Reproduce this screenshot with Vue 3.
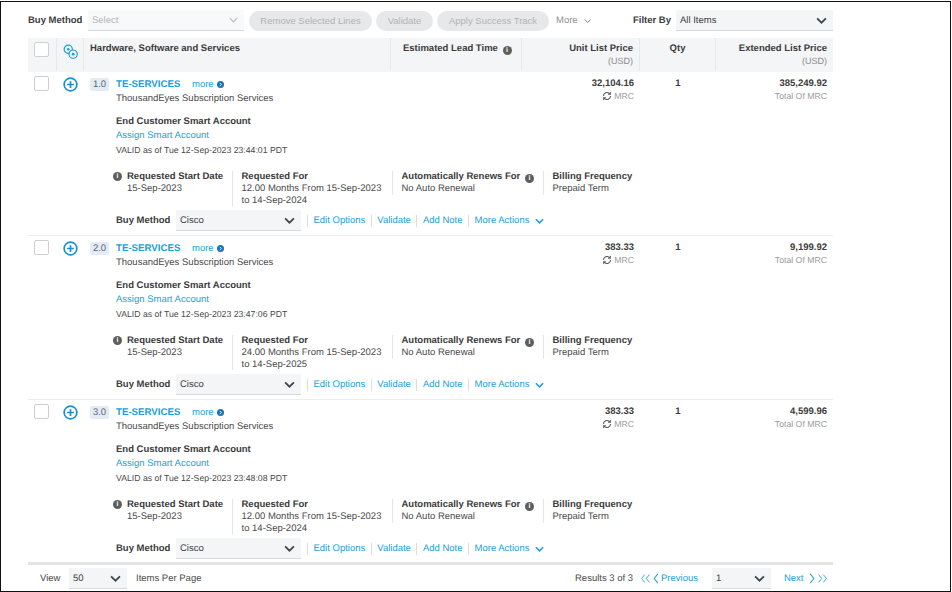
<template>
  <div class="frame">
    <div class="page">
      <div class="toolbar">
        <span class="tb-label buy-label">Buy Method</span>
        <div class="select sel-bulk">Select <svg class="chev" viewBox="0 0 10 6"><path d="M1 1l4 4 4-4" /></svg></div>
        <button class="pill w-remove">Remove Selected Lines</button>
        <button class="pill w-validate">Validate</button>
        <button class="pill w-apply">Apply Success Track</button>
        <span class="more-top">More <svg class="chev" viewBox="0 0 10 6"><path d="M1 1l4 4 4-4" /></svg></span>
        <span class="tb-label filter-label">Filter By</span>
        <div class="select sel-filter">All Items <svg class="chev dark" viewBox="0 0 10 6"><path d="M1 1l4 4 4-4" /></svg></div>
      </div>

      <div class="grid head">
        <div class="hc"><span class="check"></span></div>
        <div class="hc hc-icon">
          <svg class="gears" viewBox="0 0 16 16">
            <circle cx="5.6" cy="5.6" r="4.4" />
            <circle cx="10.8" cy="10.8" r="4.4" fill="#f3f5f7" />
            <circle cx="5.6" cy="5.6" r="1.4" class="dot" />
            <circle cx="10.8" cy="10.8" r="1.5" class="dot" />
          </svg>
        </div>
        <div class="hc hc-title"><b>Hardware, Software and Services</b></div>
        <div class="hc hc-title lead"><b>Estimated Lead Time</b> <i class="info"><em>i</em></i></div>
        <div class="hc right"><b>Unit List Price</b><span>(USD)</span></div>
        <div class="hc center"><b>Qty</b></div>
        <div class="hc right last"><b>Extended List Price</b><span>(USD)</span></div>
      </div>

      <div v-for="line in lines" :key="line.no" class="grid line">
        <div class="cell-check"><span class="check"></span></div>
        <div class="cell-plus">
          <svg class="plus" viewBox="0 0 16 16">
            <circle cx="8" cy="8" r="6.8" />
            <path d="M8 4.4v7.2M4.4 8h7.2" />
          </svg>
        </div>
        <div class="cell-title">
          <div class="title-row">
            <span class="badge">{{ line.no }}</span>
            <a class="sku">TE-SERVICES</a>
            <a class="more">more</a>
            <svg class="more-dot" viewBox="0 0 8 8"><circle cx="4" cy="4" r="4" /><path d="M3.2 2.2L5 4 3.2 5.8" /></svg>
          </div>
          <div class="subtitle">ThousandEyes Subscription Services</div>
        </div>
        <div class="cell-price">
          <b>{{ line.unit }}</b>
          <span class="mrc">
            <svg class="sync" viewBox="0 0 12 12">
              <path d="M1.8 6a4.2 4.2 0 0 1 7-3.1M10.2 6a4.2 4.2 0 0 1-7 3.1" />
              <path class="tip" d="M10.6 0.6v3.8H6.8zM1.4 11.4V7.6h3.8z" />
            </svg>
            MRC
          </span>
        </div>
        <div class="cell-qty"><b>1</b></div>
        <div class="cell-price last">
          <b>{{ line.total }}</b>
          <span class="total-of">Total Of MRC</span>
        </div>

        <div class="detail">
          <div class="account">
            <b>End Customer Smart Account</b>
            <a>Assign Smart Account</a>
            <span>VALID as of Tue 12-Sep-2023 {{ line.time }} PDT</span>
          </div>
          <div class="terms">
            <div class="term t-start">
              <i class="info side"><em>i</em></i>
              <b>Requested Start Date</b>
              <span>15-Sep-2023</span>
            </div>
            <div class="term t-for">
              <b>Requested For</b>
              <span>{{ line.months }} Months From 15-Sep-2023</span>
              <span>to {{ line.end }}</span>
            </div>
            <div class="term t-renew">
              <b>Automatically Renews For <i class="info"><em>i</em></i></b>
              <span>No Auto Renewal</span>
            </div>
            <div class="term t-bill">
              <b>Billing Frequency</b>
              <span>Prepaid Term</span>
            </div>
          </div>
          <div class="actions">
            <b class="buy">Buy Method</b>
            <div class="select sel-line">Cisco <svg class="chev dark" viewBox="0 0 10 6"><path d="M1 1l4 4 4-4" /></svg></div>
            <div class="links">
              <a>Edit Options</a>
              <a>Validate</a>
              <a>Add Note</a>
              <a>More Actions <svg class="chev blue" viewBox="0 0 10 6"><path d="M1 1l4 4 4-4" /></svg></a>
            </div>
          </div>
        </div>
      </div>

      <div class="footer">
        <span class="f-view">View</span>
        <div class="select sel-view">50 <svg class="chev dark" viewBox="0 0 10 6"><path d="M1 1l4 4 4-4" /></svg></div>
        <span class="f-items">Items Per Page</span>
        <span class="f-results">Results 3 of 3</span>
        <svg class="pager first" viewBox="0 0 14 12"><path d="M6 1L2 6l4 5M12 1L8 6l4 5" /></svg>
        <svg class="pager prev" viewBox="0 0 6 12"><path d="M5 1L1 6l4 5" /></svg>
        <a class="f-link">Previous</a>
        <div class="select sel-page">1 <svg class="chev dark" viewBox="0 0 10 6"><path d="M1 1l4 4 4-4" /></svg></div>
        <a class="f-link f-next">Next</a>
        <svg class="pager next" viewBox="0 0 6 12"><path d="M1 1l4 5-4 5" /></svg>
        <svg class="pager last-p" viewBox="0 0 14 12"><path d="M2 1l4 5-4 5M8 1l4 5-4 5" /></svg>
      </div>
    </div>
  </div>
</template>

<script setup>
const lines = [
  { no: '1.0', unit: '32,104.16', total: '385,249.92', time: '23:44:01', months: '12.00', end: '14-Sep-2024' },
  { no: '2.0', unit: '383.33', total: '9,199.92', time: '23:47:06', months: '24.00', end: '14-Sep-2025' },
  { no: '3.0', unit: '383.33', total: '4,599.96', time: '23:48:08', months: '12.00', end: '14-Sep-2024' },
]
</script>

<style>
html, body {
  margin: 0;
  background: #fff;
}
</style>

<style scoped>
.frame {
  box-sizing: border-box;
  width: 951px;
  height: 591px;
  margin-top: 1px;
  border: 1.5px solid #111;
  overflow: hidden;
  font-family: "Liberation Sans", Arial, sans-serif;
  font-size: 9.5px;
  text-rendering: geometricPrecision;
  color: #4a4a4a;
}

.page {
  width: 805px;
  margin-left: 27px;
}

a {
  color: #1ba0d8;
}

b {
  font-weight: 700;
  color: #3c3c3c;
}

.toolbar {
  display: flex;
  align-items: center;
  height: 21px;
  margin-top: 8px;
}

.tb-label {
  font-weight: 700;
  color: #3c3c3c;
  white-space: nowrap;
}

.buy-label {
  width: 60px;
}

.filter-label {
  margin-left: 42px;
  width: 43px;
}

.select {
  box-sizing: border-box;
  display: flex;
  align-items: center;
  justify-content: space-between;
  height: 21px;
  padding: 0 6px 0 4px;
  background: #f3f5f7;
  border-bottom: 1px solid #d5d9de;
  color: #3c3c3c;
}

.sel-bulk {
  width: 156px;
  margin-right: 5px;
  background: #f8f9fa;
  color: #b5b5b5;
}

.sel-filter {
  width: 157px;
}

.chev {
  width: 9px;
  height: 6px;
  fill: none;
  stroke: #b9b9b9;
  stroke-width: 1.3;
}

.chev.dark {
  width: 11px;
  height: 7px;
  stroke: #3c4650;
  stroke-width: 1.6;
}

.chev.blue {
  margin-left: 6px;
  stroke: #1ba0d8;
  stroke-width: 1.7;
}

.pill {
  box-sizing: border-box;
  height: 20px;
  margin-right: 4px;
  padding: 0;
  border: 0;
  border-radius: 10px;
  background: #e7e8e9;
  color: #b2b2b2;
  font: inherit;
}

.w-remove { width: 123px; }
.w-validate { width: 57px; }
.w-apply { width: 112px; margin-right: 7px; }

.more-top {
  display: flex;
  align-items: center;
  gap: 6px;
  width: 35px;
  color: #8f8f8f;
}

.more-top .chev {
  stroke: #777;
}

.grid {
  display: grid;
  grid-template-columns: 29px 27px 307px 131px 118px 76px 117px;
}

.head {
  height: 33px;
  margin-top: 7px;
  background: #f3f5f7;
}

.hc {
  box-sizing: border-box;
  border-right: 1px solid #e6e8ea;
  padding-top: 5px;
  line-height: 12px;
}

.hc:last-child {
  border-right: 0;
}

.hc span {
  display: block;
  color: #8a8a8a;
  font-size: 9px;
}

.hc-icon {
  padding-top: 6px;
  padding-left: 6px;
}

.hc-title {
  padding-left: 6px;
}

.lead {
  padding-left: 12px;
}

.gears {
  display: block;
  width: 15px;
  height: 15px;
  fill: none;
  stroke: #1ba0d8;
  stroke-width: 1.3;
}

.dot {
  fill: #1ba0d8;
  stroke: none;
}

.right {
  padding-right: 6px;
  text-align: right;
}

.center {
  text-align: center;
}

.last {
  padding-right: 6px;
}

.check {
  box-sizing: border-box;
  display: block;
  width: 15px;
  height: 15px;
  margin-left: 6px;
  background: #fff;
  border: 1px solid #cfcfcf;
  border-radius: 2px;
}

.hc .check {
  margin-top: -1px;
}

.info {
  display: inline-flex;
  align-items: center;
  justify-content: center;
  width: 9px;
  height: 9px;
  margin-left: 2px;
  border-radius: 50%;
  background: #5e5e5e;
  vertical-align: -1px;
}

.info em {
  color: #fff;
  font: 700 7px/9px "Liberation Sans", Arial, sans-serif;
}

.line {
  height: 164px;
  grid-template-rows: 38px 1fr;
  border-top: 1px solid #eceded;
  box-sizing: border-box;
}

.head + .line {
  border-top-color: #f3f5f7;
}

.cell-check {
  padding-top: 4px;
}

.cell-plus {
  padding-top: 5px;
  padding-left: 6px;
}

.plus {
  display: block;
  width: 15px;
  height: 15px;
  fill: none;
  stroke: #1491d0;
  stroke-width: 1.8;
}

.cell-title {
  grid-column: 3 / 5;
  padding-left: 6px;
}

.title-row {
  display: flex;
  align-items: center;
  height: 14px;
  margin-top: 5px;
}

.badge {
  width: 19px;
  height: 13px;
  margin-right: 7px;
  border-radius: 2px;
  background: #e3ebf6;
  color: #5f6670;
  font-size: 9.5px;
  line-height: 13px;
  text-align: center;
}

.sku {
  width: 76px;
  font-size: 9.7px;
  font-weight: 700;
}

.more {
  margin-right: 3px;
  width: 22px;
}

.more-dot {
  width: 7px;
  height: 7px;
  fill: #1b75b8;
}

.more-dot path {
  fill: none;
  stroke: #fff;
  stroke-width: 1;
}

.subtitle {
  margin-top: 1px;
  padding-left: 26px;
  line-height: 13px;
}

.cell-price {
  box-sizing: border-box;
  padding-top: 5px;
  padding-right: 6px;
  line-height: 13px;
  text-align: right;
}

.cell-price b,
.cell-price span {
  display: block;
}

.mrc,
.total-of {
  color: #9a9a9a;
  font-size: 8.7px;
}

.sync {
  width: 10px;
  height: 10px;
  vertical-align: -2px;
  fill: none;
  stroke: #555;
  stroke-width: 1.3;
}

.sync .tip {
  fill: #555;
  stroke: none;
}

.cell-qty {
  padding-top: 5px;
  line-height: 13px;
  text-align: center;
}

.detail {
  grid-column: 3 / 8;
  padding-left: 32px;
}

.account {
  margin-top: 5px;
  line-height: 14px;
}

.account b,
.account a,
.account span {
  display: block;
}

.account span {
  font-size: 8.7px;
}

.terms {
  display: flex;
  margin-top: 14px;
  height: 35px;
  line-height: 12px;
}

.term {
  box-sizing: border-box;
  position: relative;
  padding-left: 9px;
  border-left: 1px solid #e4e4e4;
}

.term b,
.term span {
  display: block;
}

.t-start {
  width: 115.5px;
  padding-left: 11px;
  border-left: 0;
}

.info.side {
  position: absolute;
  left: -3px;
  top: 1px;
  margin: 0;
}

.t-for { width: 160px; }
.t-renew { width: 151px; height: 24px; }
.t-bill { width: 100px; height: 24px; }

.actions {
  display: flex;
  align-items: center;
  margin-top: 4px;
  height: 21px;
}

.buy {
  width: 60px;
}

.sel-line {
  width: 125px;
}

.links {
  display: flex;
  margin-left: 6px;
}

.links a {
  display: flex;
  align-items: center;
  padding: 0 5.5px;
  height: 12px;
  border-left: 1px solid #dcdcdc;
}

.footer {
  display: flex;
  align-items: center;
  box-sizing: border-box;
  height: 27px;
  padding-top: 3px;
  border-top: 3px solid #e4e4e4;
  margin-top: -1px;
}

.f-view {
  margin-left: 12px;
  width: 29px;
}

.sel-view {
  width: 58px;
  height: 21px;
}

.f-items {
  width: 439px;
  margin-left: 9px;
}

.f-results {
  width: 65px;
}

.pager {
  height: 11px;
  fill: none;
  stroke: #1ba0d8;
  stroke-width: 1.1;
}

.first { width: 11px; margin-right: 2px; }
.prev { width: 6px; margin-right: 2px; }
.next { width: 6px; margin-left: 5px; margin-right: 2px; }
.last-p { width: 11px; }

.sel-page {
  width: 59px;
  height: 21px;
  margin-left: 14px;
  margin-right: 13px;
}
</style>
